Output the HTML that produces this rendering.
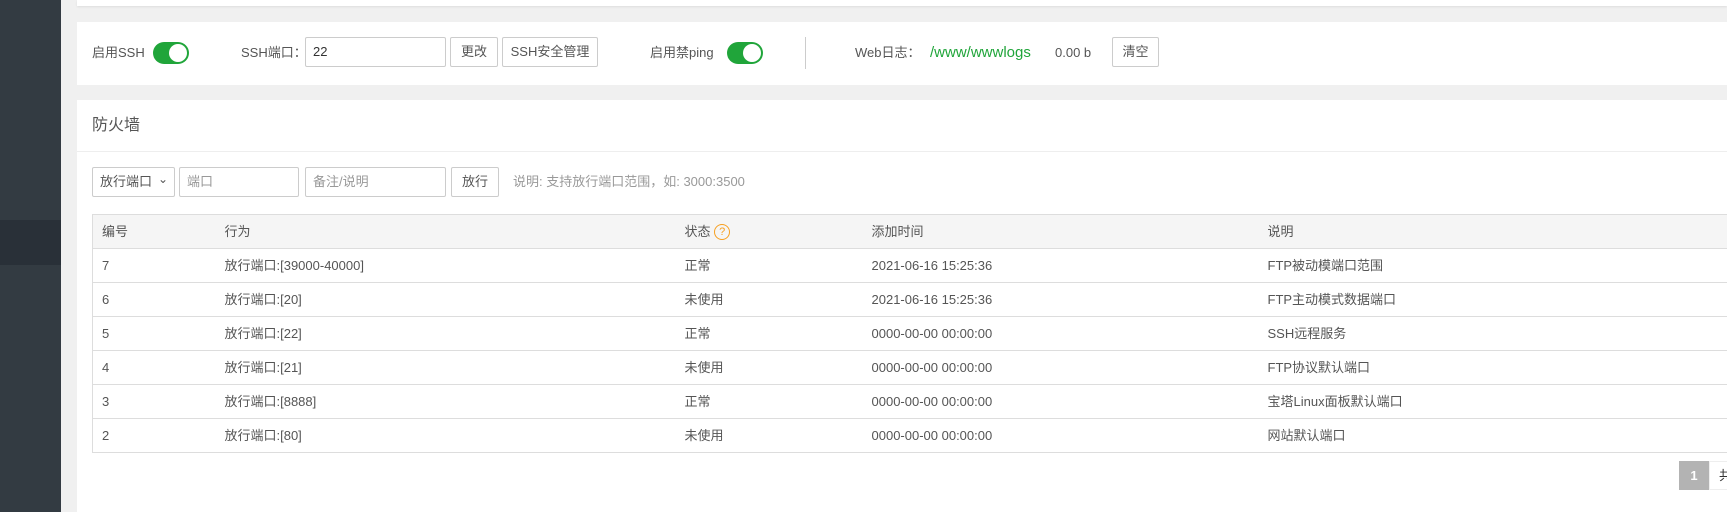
<!DOCTYPE html>
<html><head><meta charset="utf-8"><style>
*{box-sizing:border-box;margin:0;padding:0}
body{width:1727px;height:512px;overflow:hidden;background:#f0f0f0;font-family:"Liberation Sans","Noto Sans CJK SC",sans-serif;font-size:13px;line-height:16px;color:#555;position:relative}
.side{position:absolute;left:0;top:0;width:61px;height:512px;background:#333b42}
.side .act{position:absolute;top:220px;height:45px;width:61px;background:#293038}
.card{position:absolute;left:77px;right:0;background:#fff}
.c1{top:0;height:6px;box-shadow:0 1px 2px rgba(0,0,0,.08)}
.c2{top:22px;height:63px}
.c3{top:100px;height:412px}
.abs{position:absolute;white-space:nowrap}
.tog{position:absolute;width:36px;height:22px;border-radius:11px;background:#20a53a}
.tog:after{content:"";position:absolute;right:2px;top:2px;width:18px;height:18px;border-radius:50%;background:#fff}
.inp{position:absolute;border:1px solid #ccc;border-radius:2px;height:30px;line-height:28px;padding-left:7px;color:#999}
.btn{position:absolute;border:1px solid #ccc;border-radius:2px;height:30px;line-height:28px;text-align:center;color:#555;background:#fff}
table{position:absolute;left:15px;top:114px;width:1700px;border-collapse:collapse;border:1px solid #ddd;table-layout:fixed}
td,th{height:34px;border-bottom:1px solid #ddd;text-align:left;font-weight:normal;padding:0;vertical-align:middle}
td span.t,th span.t{display:inline-block;height:16px;line-height:16px;vertical-align:middle}
th{background:#f5f5f5}
</style></head><body>
<div class="side"><div class="act"></div></div>
<div class="card c1"></div>
<div class="card c2">
 <div class="abs" style="left:15px;top:23px">启用SSH</div>
 <div class="tog" style="left:76px;top:20px"></div>
 <div class="abs" style="left:164px;top:23px">SSH端口：</div>
 <div class="inp" style="left:228px;top:15px;width:141px;color:#333">22</div>
 <div class="btn" style="left:373px;top:15px;width:48px">更改</div>
 <div class="btn" style="left:425px;top:15px;width:96px">SSH安全管理</div>
 <div class="abs" style="left:573px;top:23px">启用禁ping</div>
 <div class="tog" style="left:650px;top:20px"></div>
 <div class="abs" style="left:728px;top:15px;width:1px;height:32px;background:#ccc"></div>
 <div class="abs" style="left:778px;top:23px">Web日志：</div>
 <div class="abs" style="left:853px;top:23px;font-size:15px;color:#20a53a">/www/wwwlogs</div>
 <div class="abs" style="left:978px;top:23px">0.00 b</div>
 <div class="btn" style="left:1035px;top:15px;width:47px">清空</div>
</div>
<div class="card c3">
 <div class="abs" style="left:15px;top:18px;font-size:16px;color:#555">防火墙</div>
 <div class="abs" style="left:0;right:0;top:51px;height:1px;background:#eee"></div>
 <div class="inp" style="left:15px;top:67px;width:83px;color:#555">放行端口 <span style="position:absolute;right:6px;top:-3px;font-size:12px">&#8964;</span></div>
 <div class="inp" style="left:102px;top:67px;width:120px">端口</div>
 <div class="inp" style="left:228px;top:67px;width:141px">备注/说明</div>
 <div class="btn" style="left:374px;top:67px;width:48px">放行</div>
 <div class="abs" style="left:436px;top:74px;color:#999">说明: 支持放行端口范围，如: 3000:3500</div>
 <table>
  <colgroup><col style="width:132px"><col style="width:460px"><col style="width:187px"><col style="width:396px"><col></colgroup>
  <tr><th style="padding-left:9px"><span class="t">编号</span></th><th><span class="t">行为</span></th><th><span class="t">状态</span> <span style="display:inline-block;width:16px;height:16px;border:1px solid #f7a021;border-radius:50%;color:#f7a021;text-align:center;line-height:14px;font-size:11px;vertical-align:middle">?</span></th><th><span class="t">添加时间</span></th><th><span class="t">说明</span></th></tr>
  <tr><td style="padding-left:9px"><span class="t">7</span></td><td><span class="t">放行端口:[39000-40000]</span></td><td><span class="t">正常</span></td><td><span class="t">2021-06-16 15:25:36</span></td><td><span class="t">FTP被动模端口范围</span></td></tr>
  <tr><td style="padding-left:9px"><span class="t">6</span></td><td><span class="t">放行端口:[20]</span></td><td><span class="t">未使用</span></td><td><span class="t">2021-06-16 15:25:36</span></td><td><span class="t">FTP主动模式数据端口</span></td></tr>
  <tr><td style="padding-left:9px"><span class="t">5</span></td><td><span class="t">放行端口:[22]</span></td><td><span class="t">正常</span></td><td><span class="t">0000-00-00 00:00:00</span></td><td><span class="t">SSH远程服务</span></td></tr>
  <tr><td style="padding-left:9px"><span class="t">4</span></td><td><span class="t">放行端口:[21]</span></td><td><span class="t">未使用</span></td><td><span class="t">0000-00-00 00:00:00</span></td><td><span class="t">FTP协议默认端口</span></td></tr>
  <tr><td style="padding-left:9px"><span class="t">3</span></td><td><span class="t">放行端口:[8888]</span></td><td><span class="t">正常</span></td><td><span class="t">0000-00-00 00:00:00</span></td><td><span class="t">宝塔Linux面板默认端口</span></td></tr>
  <tr><td style="padding-left:9px"><span class="t">2</span></td><td><span class="t">放行端口:[80]</span></td><td><span class="t">未使用</span></td><td><span class="t">0000-00-00 00:00:00</span></td><td><span class="t">网站默认端口</span></td></tr>
 </table>
 <div class="abs" style="left:1602px;top:361px;width:30px;height:29px;background:#b3b3b3;color:#fff;text-align:center;line-height:29px;font-weight:bold">1</div>
 <div class="abs" style="left:1632px;top:361px;width:40px;height:29px;border:1px solid #eee;line-height:27px;padding-left:9px;color:#333">共</div>
</div>
</body></html>
